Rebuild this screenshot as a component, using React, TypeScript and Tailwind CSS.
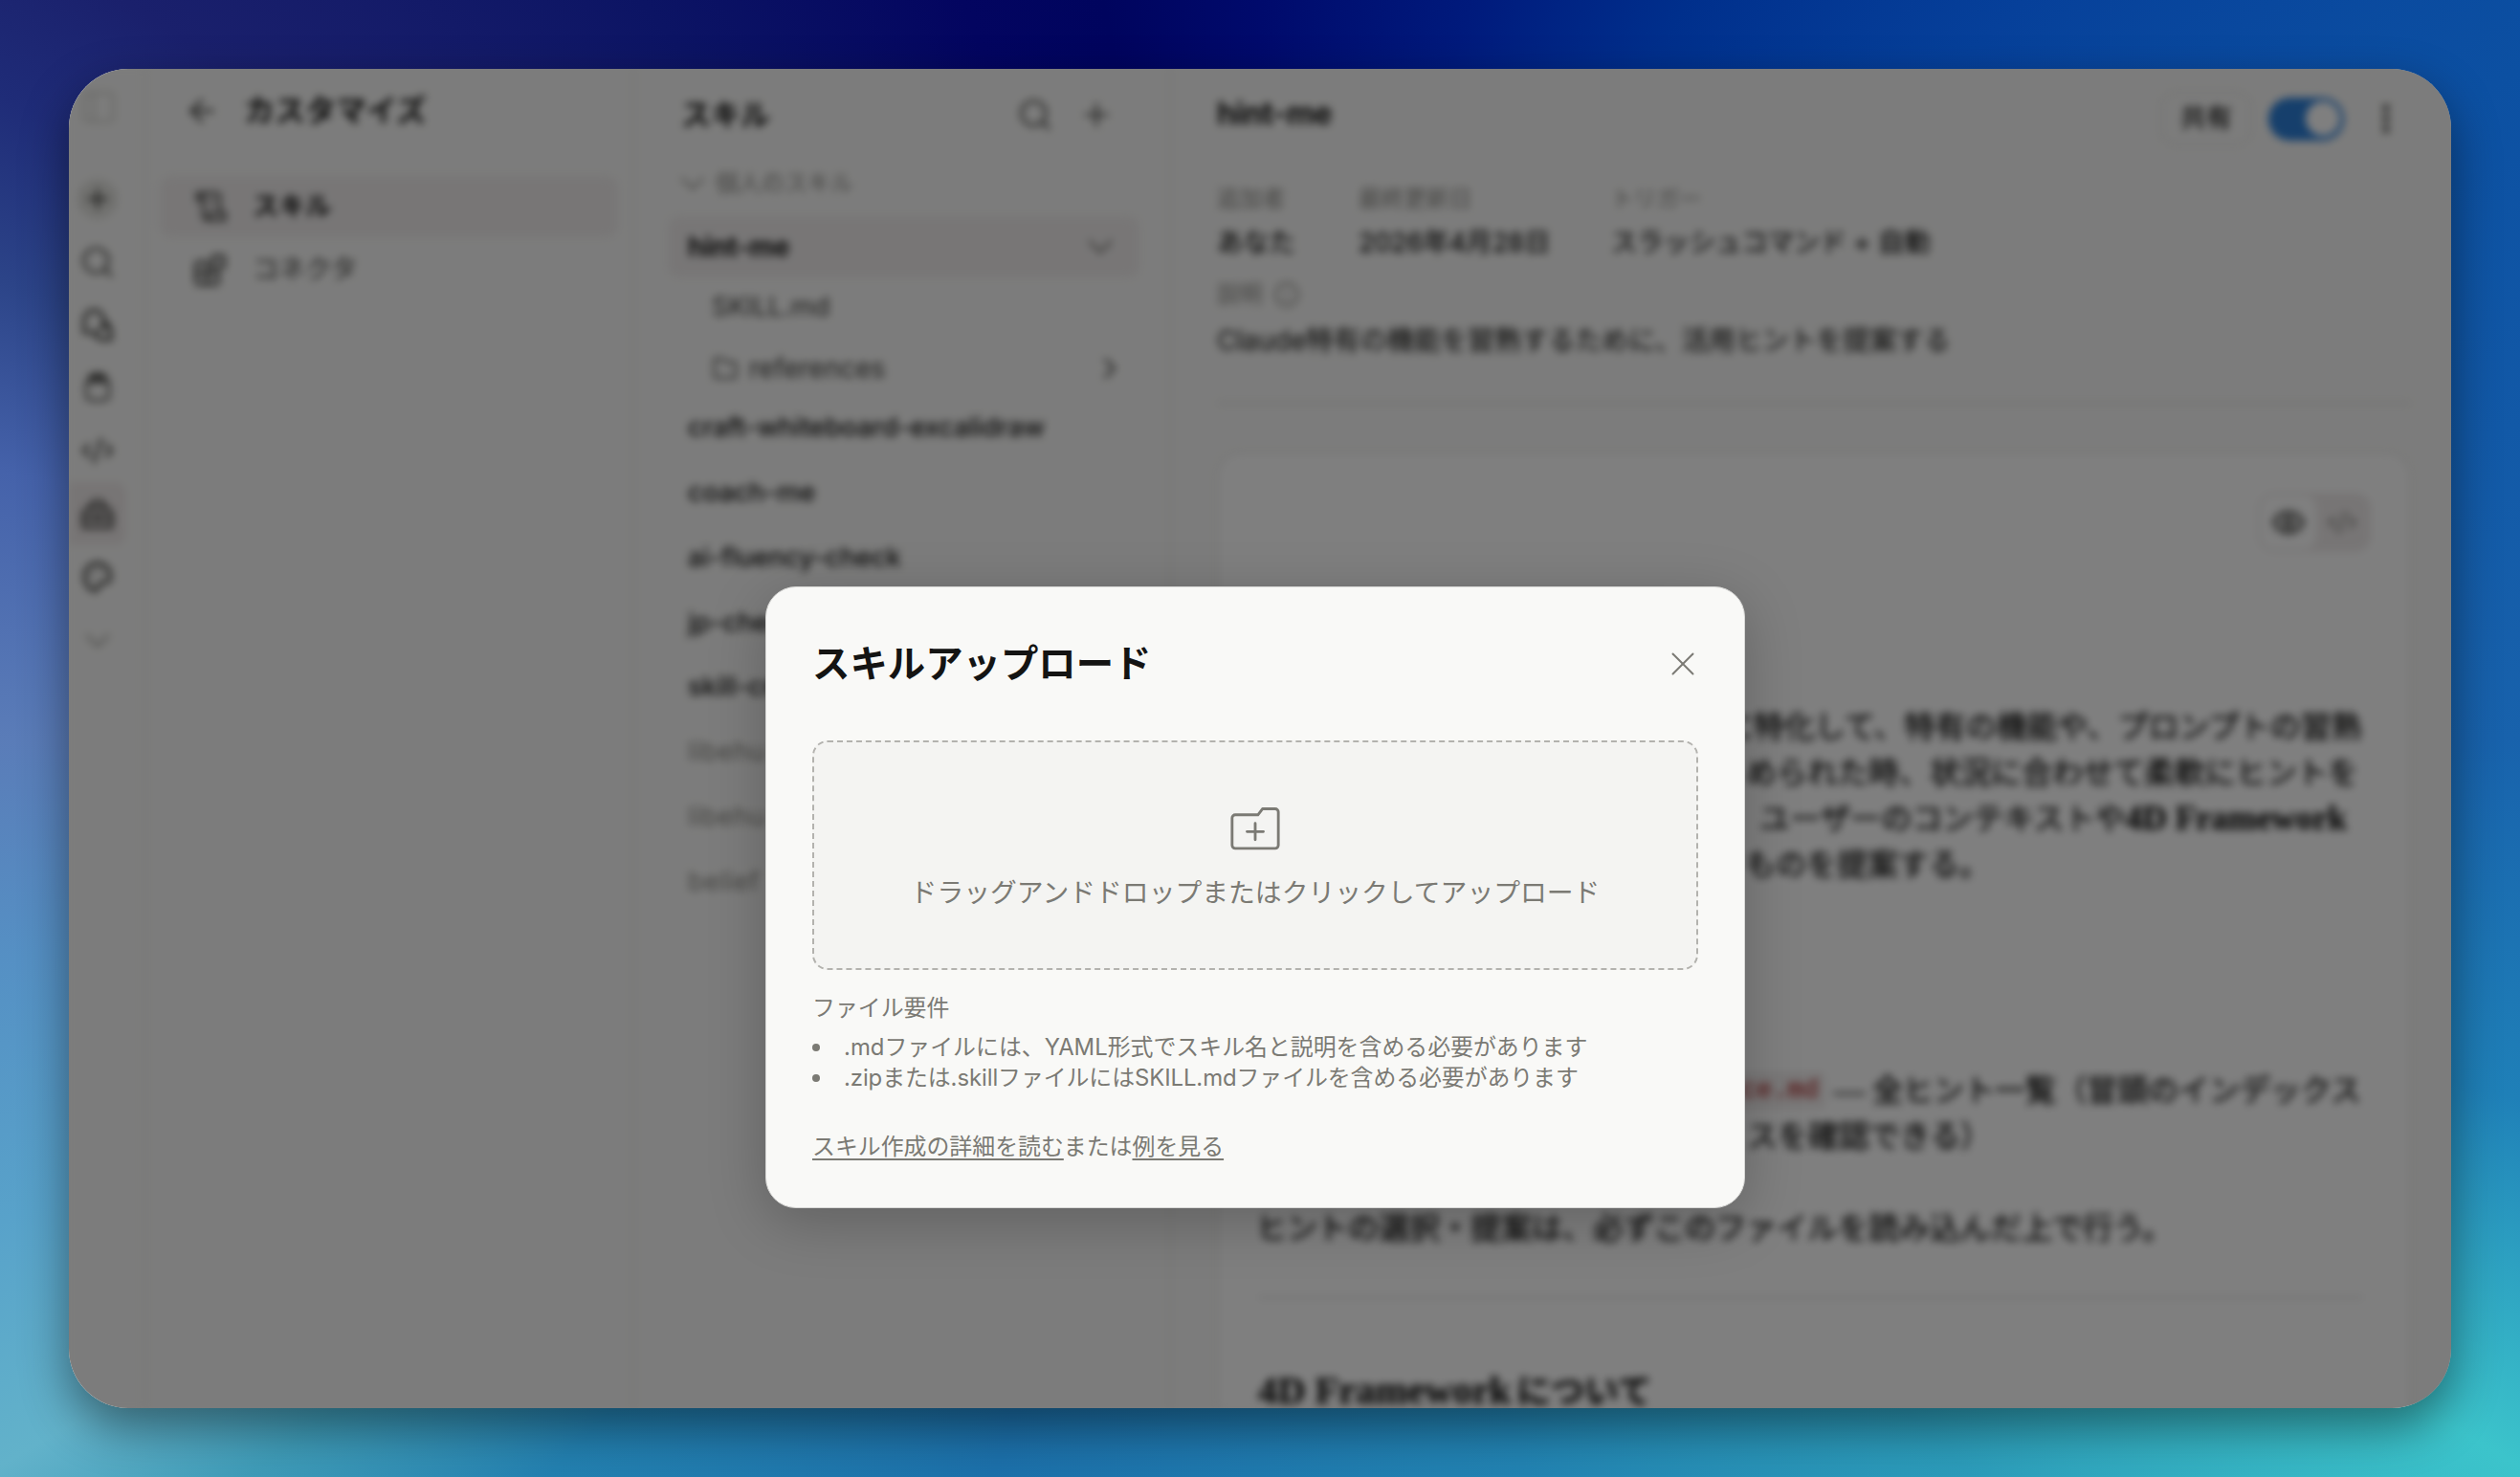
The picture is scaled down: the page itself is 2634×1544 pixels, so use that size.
import { ReactNode } from "react";
import {
  ArrowLeft,
  Blocks,
  ChevronDown,
  ChevronRight,
  CodeXml,
  EllipsisVertical,
  Eye,
  Info,
  PanelLeft,
  Plus,
  Search,
  X,
} from "lucide-react";
import clsx from "clsx";

const SANS = "font-['Inter','Noto_Sans_CJK_JP',sans-serif]";
const SERIF = "font-['Liberation_Serif','Noto_Sans_CJK_JP',serif]";

const skills = [
  { name: "craft-whiteboard-excalidraw", enabled: true },
  { name: "coach-me", enabled: true },
  { name: "ai-fluency-check", enabled: true },
  { name: "jp-check", enabled: true },
  { name: "skill-creator", enabled: true },
  { name: "libehu", enabled: false },
  { name: "libehu", enabled: false },
  { name: "belief", enabled: false },
];

function Glyph({ children, size = 36 }: { children: ReactNode; size?: number }) {
  return (
    <svg
      width={size}
      height={size}
      viewBox="0 0 24 24"
      fill="none"
      stroke="currentColor"
      strokeWidth={1.6}
      strokeLinecap="round"
      strokeLinejoin="round"
    >
      {children}
    </svg>
  );
}

function RailItem({ children, active }: { children: ReactNode; active?: boolean }) {
  return (
    <div
      className={clsx(
        "flex h-[65.800px] w-[60px] items-center justify-center",
        active && "rounded-r-xl bg-[#efeaea]"
      )}
    >
      {children}
    </div>
  );
}

function Rail() {
  return (
    <nav className="flex w-[80px] shrink-0 flex-col border-r-2 border-[#eaeaea] bg-[#f9f9f8] text-[#3d3d3a]">
      <div className="flex h-[80px] w-[62px] items-center justify-center text-[#d5d5d0]">
        <PanelLeft size={40} strokeWidth={1.8} />
      </div>
      <div className="h-[23px]" />
      <RailItem>
        <div className="flex size-[42px] items-center justify-center rounded-full bg-[#e2e2de]">
          <Plus size={32} strokeWidth={2.2} />
        </div>
      </RailItem>
      <RailItem>
        <Search size={38} strokeWidth={1.7} />
      </RailItem>
      <RailItem>
        <Glyph size={42}>
          <path d="M4 17V9.500a5.800 5.800 0 0 1 11.600 0c0 1.500.4 2.800 1.400 4.500" strokeWidth={1.9} />
          <path d="M4 17h4.500c3.500 0 5.500-1.500 6.600-4.500" />
          <path d="M17 11c2 1.500 3 3.500 3 6V21h-5c-2.500 0-4.200-1.500-5-4" strokeWidth={2} />
        </Glyph>
      </RailItem>
      <RailItem>
        <Glyph size={38}>
          <path d="M4.500 8.500h15v8.500a3.500 3.500 0 0 1-3.500 3.500H8A3.500 3.500 0 0 1 4.500 17z" />
          <path d="M6 6h12M8 3.500h8" strokeWidth={2.2} />
        </Glyph>
      </RailItem>
      <RailItem>
        <CodeXml size={36} strokeWidth={1.9} />
      </RailItem>
      <RailItem active>
        <Glyph size={42}>
          <path d="M3.500 20V12.500a3.500 3.500 0 0 1 3.500-3.500h10a3.500 3.500 0 0 1 3.500 3.500V20z" strokeWidth={1.9} />
          <path d="M8 9V7a2.500 2.500 0 0 1 2.500-2.500h3A2.500 2.500 0 0 1 16 7v2M3.500 14.500h17M10 13v3M14 13v3" strokeWidth={1.9} />
        </Glyph>
      </RailItem>
      <RailItem>
        <Glyph size={40}>
          <path
            d="M12 3.500a8 8 0 0 0-8 8.500c0 4.500 3 8.500 6.500 8.500 2.500 0 1.500-2.500 2.500-4s2.500-1 4-1c2 0 3-1.500 3-3.500 0-5-3.500-8.500-8-8.500z"
            strokeWidth={2.2}
          />
          <path d="M8 11v.1M11 8v.1M15 8.500v.1" />
        </Glyph>
      </RailItem>
      <div className="flex h-[68px] w-[60px] items-center justify-center text-[#a0a09b]">
        <ChevronDown size={44} strokeWidth={1.4} />
      </div>
    </nav>
  );
}

function CustomizeNav() {
  return (
    <section className="flex w-[511px] shrink-0 flex-col border-r-2 border-[#eaeaea] px-[15px]">
      <div className="flex h-[88px] items-center pl-[25px]">
        <ArrowLeft size={38} strokeWidth={1.8} className="text-[#3d3d3a]" />
        <h2 className="ml-[25px] text-[32px] font-bold leading-none text-[#141413]">カスタマイズ</h2>
      </div>
      <div className="mt-[24px] flex h-[64px] items-center rounded-xl bg-[#f0eded] pl-[33px]">
        <span className="w-[64px] text-[#3d3d3a]">
          <Glyph size={42}>
            <path d="M3.500 4h11.500a2 2 0 0 1 2 2v9.500M3.500 4v4H7V4M7 8v9.500A2.500 2.500 0 0 0 9.500 20H20v-4.500h-9.500V20" />
            <path d="M11 9h2.500" />
          </Glyph>
        </span>
        <span className="text-[27.500px] font-bold text-[#141413]">スキル</span>
      </div>
      <div className="mt-[2px] flex h-[64px] items-center pl-[35px]">
        <Blocks size={35} strokeWidth={2.2} className="text-[#3d3d3a]" />
        <span className="ml-[27px] text-[27.500px] text-[#3d3d3a]">コネクタ</span>
      </div>
    </section>
  );
}

function SkillList() {
  return (
    <section className="flex w-[561px] shrink-0 flex-col border-r-2 border-[#eaeaea] pl-[35px] pr-[31px]">
      <div className="flex h-[95px] items-center pl-[14px]">
        <h2 className="flex-1 text-[31px] font-bold leading-none text-[#141413]">スキル</h2>
        <Search size={38} strokeWidth={1.7} className="text-[#3d3d3a]" />
        <Plus size={38} strokeWidth={1.7} className="ml-[26px] mr-[26px] text-[#3d3d3a]" />
      </div>
      <div className="flex h-[50px] items-center pl-[5px] text-[24px] text-[#8a8984]">
        <ChevronDown size={42} strokeWidth={1.3} className="mr-[3px]" />
        個人のスキル
      </div>
      <div className="mt-[9px] flex h-[64px] items-center justify-between rounded-xl bg-[#f0eded] pl-[21px] pr-[19px]">
        <span className="text-[28px] font-bold tracking-[-0.2px] text-[#141413]">hint-me</span>
        <ChevronDown size={44} strokeWidth={1.4} className="text-[#73726c]" />
      </div>
      <div className="flex h-[62px] items-center pl-[46px] text-[27.500px] text-[#3d3d3a]">SKILL.md</div>
      <div className="flex h-[66px] items-center pl-[45px] pr-[13px] text-[28px] text-[#3d3d3a]">
        <Glyph size={30}>
          <path d="M3 4h7l3 3h6a2 2 0 0 1 2 2v9a2 2 0 0 1-2 2H5a2 2 0 0 1-2-2z" />
        </Glyph>
        <span className="ml-[10px] flex-1">references</span>
        <ChevronRight size={36} strokeWidth={1.7} />
      </div>
      {skills.map((skill, i) => (
        <div
          key={i}
          className={clsx(
            "flex h-[67.800px] items-center pl-[21px] text-[27.500px]",
            skill.enabled ? "font-medium tracking-[-0.1px] text-[#141413]" : "tracking-[0.4px] text-[#8a8984]",
            i === 0 && "-mt-[5px]"
          )}
        >
          {skill.name}
        </div>
      ))}
    </section>
  );
}

function Meta({ label, value, className }: { label: string; value: string; className: string }) {
  return (
    <div className={className}>
      <div className="text-[23.700px] leading-[44px] text-[#8a8984]">{label}</div>
      <div className="text-[27.300px] leading-[48px] text-[#1a1a19] [-webkit-text-stroke:0.4px]">{value}</div>
    </div>
  );
}

function SkillDetail() {
  return (
    <section className="flex min-w-0 flex-1 flex-col pl-[48px] pr-[42px]">
      <div className="flex h-[104px] items-center">
        <h1 className="-mt-[10px] flex-1 text-[32px] font-bold tracking-[-0.4px] text-[#141413]">hint-me</h1>
        <div className="flex h-[56px] w-[96px] items-center justify-center rounded-2xl border-2 border-[#e6e6e6] text-[27px] font-medium text-[#1f1f1e]">
          共有
        </div>
        <div className="ml-[17px] flex h-[45px] w-[79px] items-center justify-end rounded-full bg-[#2c7fd8] px-[4px]">
          <div className="size-[36px] rounded-full bg-white" />
        </div>
        <EllipsisVertical size={38} strokeWidth={2.4} className="ml-[25px] mr-[7px] text-[#3d3d3a]" />
      </div>
      <div className="mt-[10px] flex">
        <Meta className="w-[148px]" label="追加者" value="あなた" />
        <Meta className="w-[264px]" label="最終更新日" value="2026年4月28日" />
        <Meta className="flex-1" label="トリガー" value="スラッシュコマンド + 自動" />
      </div>
      <div className="mt-[8px] flex h-[44px] items-center gap-[12px] text-[23.700px] text-[#8a8984]">
        説明
        <Info size={28} strokeWidth={1.8} />
      </div>
      <p className="text-[28.100px] leading-[52px] text-[#333331] [-webkit-text-stroke:0.4px]">
        Claude特有の機能を習熟するために、活用ヒントを提案する
      </p>
      <div className="mt-[38px] h-[3px] shrink-0 bg-[#e8e8e8]" />
      <article className="mt-[50px] min-h-0 flex-1 rounded-t-[24px] border-2 border-b-0 border-[#e8e8e8] bg-white pl-[41px] pr-[40px] pt-[40px]">
        <div className="ml-auto flex h-[62px] w-[118px] items-center rounded-2xl bg-[#efebeb] p-[3px]">
          <div className="flex h-[56px] w-[58px] items-center justify-center rounded-[13px] bg-white text-[#3d3d3a]">
            <Eye size={36} strokeWidth={2.4} />
          </div>
          <div className="flex flex-1 items-center justify-center text-[#8a8984]">
            <CodeXml size={32} />
          </div>
        </div>
        <div
          className={clsx(
            SERIF,
            "mt-[159px] whitespace-nowrap text-[32px] leading-[48px] text-[#141413] [-webkit-text-stroke:0.6px]"
          )}
        >
          <p className="pl-[486px]">に特化して、特有の機能や、プロンプトの習熟</p>
          <p className="pl-[510px]">められた時、状況に合わせて柔軟にヒントを</p>
          <p className="pl-[524px]">
            ユーザーのコンテキストや
            <b className="text-[35.500px] font-bold leading-none text-[#141413]">4D Framework</b>
          </p>
          <p className="pl-[509px]">ものを提案する。</p>
          <p className="mt-[188px] flex items-center pl-[416px]">
            <code className="rounded-lg bg-[#f3f0f0] px-[8px] font-['Liberation_Mono',monospace] text-[27px] leading-[40px] text-[#b03a3a]">
              ference.md
            </code>
            <span className="ml-[8px]">— 全ヒント一覧（冒頭のインデックス</span>
          </p>
          <p className="pl-[511px]">スを確認できる）</p>
          <p className="-ml-[2px] mt-[48px]">ヒントの選択・提案は、必ずこのファイルを読み込んだ上で行う。</p>
          <div className="mr-[8px] mt-[47px] h-[3px] bg-[#e8e8e8]" />
          <h3 className="mt-[71px] text-[35.500px] font-bold leading-[52px] text-[#141413]">
            <span className="mr-[6px] text-[40.500px] leading-none">4D Framework</span>について
          </h3>
        </div>
      </article>
    </section>
  );
}

function UploadDialog() {
  return (
    <div
      role="dialog"
      className="flex h-[650px] w-[1024px] flex-col rounded-[32px] border border-[#d8d8d6] bg-[#f9f9f7] px-[48px] text-[#7b7a74] shadow-[0_14px_60px_rgba(0,0,0,0.22)]"
    >
      <div className="flex h-[160px] items-center justify-between">
        <h2 className="pt-[2px] text-[39.400px] font-bold leading-none text-[#141413]">スキルアップロード</h2>
        <X size={42} strokeWidth={1.1} className="-mr-[5px]" />
      </div>
      <div className="flex h-[240px] flex-col items-center rounded-[16px] border-2 border-dashed border-[#b3b2ae] bg-[#f4f4f2]">
        <svg
          width="54"
          height="48"
          viewBox="0 0 57 50"
          fill="none"
          stroke="currentColor"
          strokeWidth="3"
          strokeLinecap="round"
          strokeLinejoin="round"
          className="mt-[66px]"
        >
          <path d="M7 10h24.500l5-6.600H50.500a3.500 3.500 0 0 1 3.500 3.500V43.500a3.500 3.500 0 0 1-3.500 3.500H6.500A3.500 3.500 0 0 1 3 43.500V13.500A3.500 3.500 0 0 1 6.500 10z" />
          <path d="M28.500 19.500v18M19.500 28.500h18" />
        </svg>
        <p className="mt-[21px] text-[27.800px] leading-[44px]">
          ドラッグアンドドロップまたはクリックしてアップロード
        </p>
      </div>
      <div className="mt-[24px] text-[23.900px] leading-[32px]">
        <p>ファイル要件</p>
        <ul className="mt-[9px]">
          <li className="flex items-center">
            <span className="mr-[25px] size-[8px] rounded-full bg-current" />
            .mdファイルには、YAML形式でスキル名と説明を含める必要があります
          </li>
          <li className="flex items-center tracking-[-0.08px]">
            <span className="mr-[25px] size-[8px] rounded-full bg-current" />
            .zipまたは.skillファイルにはSKILL.mdファイルを含める必要があります
          </li>
        </ul>
        <p className="mt-[40px]">
          <a className="underline decoration-2 underline-offset-[4px]">スキル作成の詳細を読む</a>または
          <a className="underline decoration-2 underline-offset-[4px]">例を見る</a>
        </p>
      </div>
    </div>
  );
}

export default function App() {
  return (
    <div
      lang="ja"
      className={clsx(
        SANS,
        "h-[1544px] w-[2634px] overflow-hidden p-[72px]",
        "bg-[conic-gradient(#000a6c_0deg,#001a7c_16deg,#002f8c_30deg,#06409a_46deg,#0c50a2_62deg,#1862ac_90deg,#1f80b8_106deg,#3cc4cb_120deg,#2c9cba_136deg,#2283b2_160deg,#1c70aa_200deg,#2380b0_224deg,#3f9cb8_234deg,#62b2ca_240deg,#58a2ca_249deg,#5590c4_260deg,#5a7cb8_270deg,#4562aa_282deg,#2c4488_290deg,#1f2c78_297deg,#1a206c_303deg,#0c1464_320deg,#030560_338deg,#00045e_348deg,#000a6c_360deg)]"
      )}
    >
      <div className="relative h-[1400px] w-[2490px] overflow-hidden rounded-[62px] bg-[#f9f9f8] shadow-[0_20px_50px_rgba(0,0,0,0.45)]">
        <div className="flex h-full w-full blur-[4px]">
          <Rail />
          <CustomizeNav />
          <SkillList />
          <SkillDetail />
        </div>
        <div className="absolute inset-0 flex items-start bg-black/50 pl-[728px] pt-[541px]">
          <UploadDialog />
        </div>
      </div>
    </div>
  );
}
